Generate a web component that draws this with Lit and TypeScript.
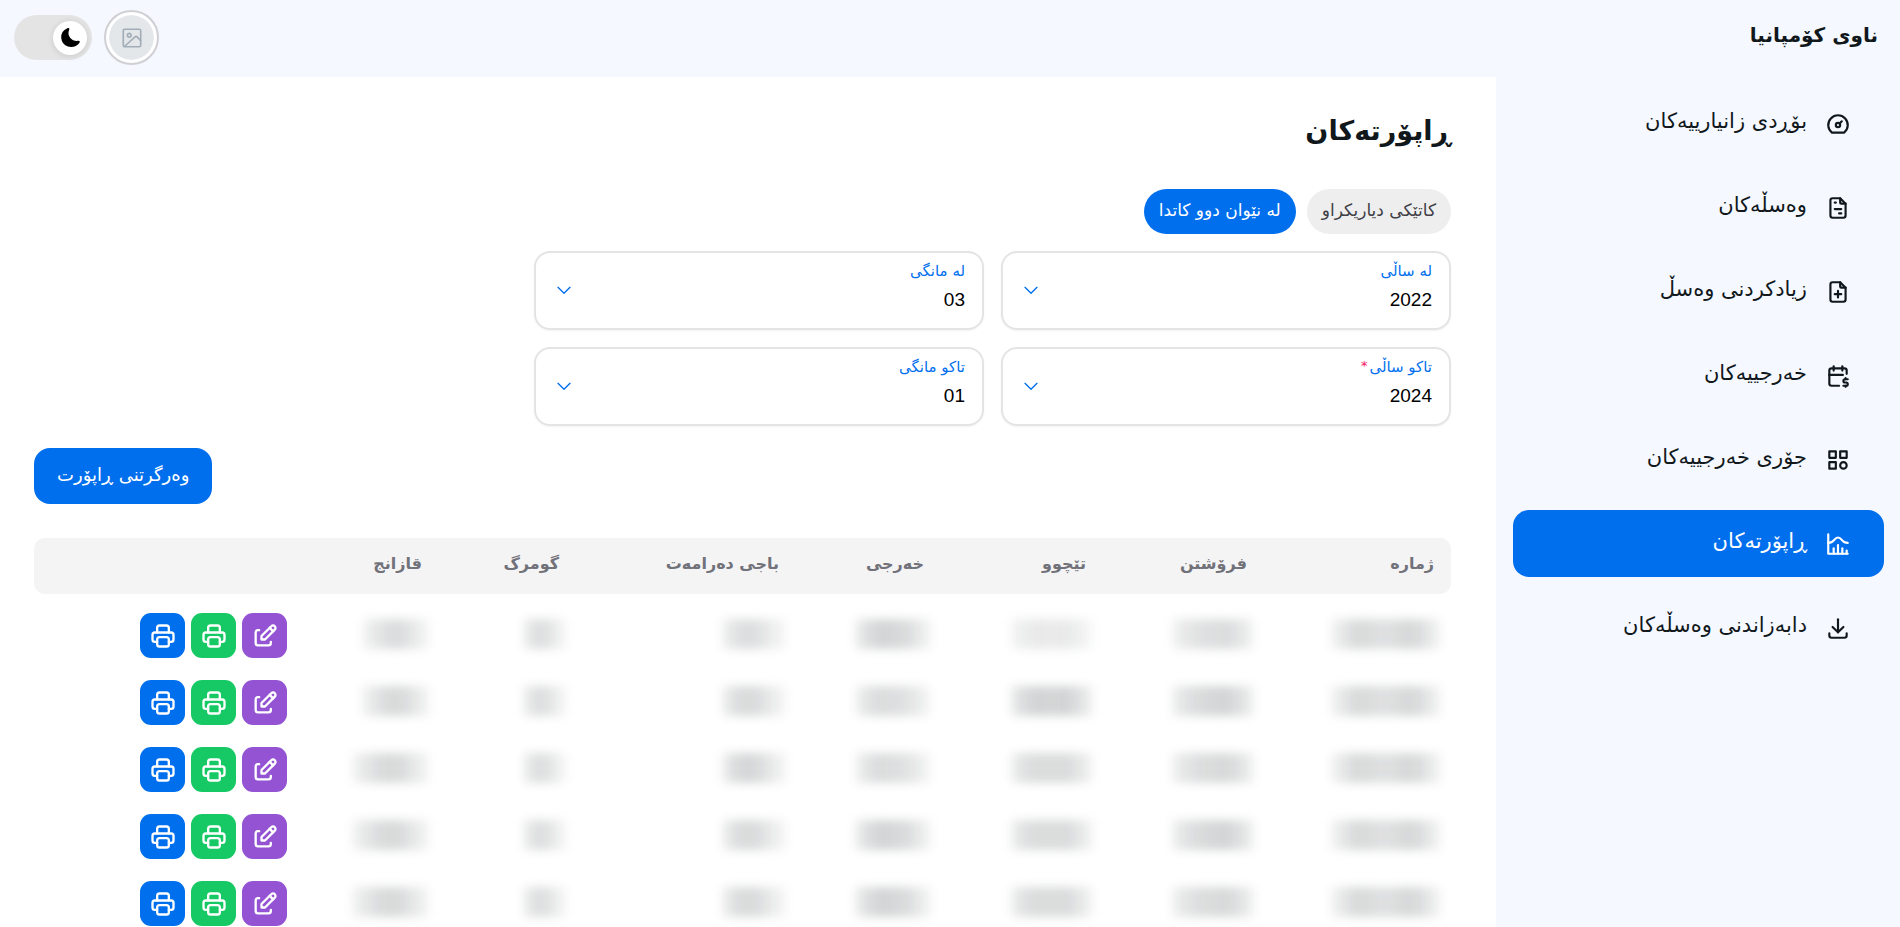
import { LitElement, html, svg, css } from "lit";
import { customElement, property, state } from "lit/decorators.js";
import { classMap } from "lit/directives/class-map.js";

const ICONS: Record<string, string[]> = {
  dashboard: ["M10 13a2 2 0 1 0 4 0a2 2 0 1 0 -4 0", "M13.45 11.55l2.05 -2.05", "M6.4 20a9 9 0 1 1 11.2 0z"],
  invoice: ["M14 3v4a1 1 0 0 0 1 1h4", "M17 21h-10a2 2 0 0 1 -2 -2v-14a2 2 0 0 1 2 -2h7l5 5v11a2 2 0 0 1 -2 2z", "M9 7h1", "M9 13h6", "M13 17h2"],
  filePlus: ["M14 3v4a1 1 0 0 0 1 1h4", "M17 21h-10a2 2 0 0 1 -2 -2v-14a2 2 0 0 1 2 -2h7l5 5v11a2 2 0 0 1 -2 2z", "M12 11v6", "M9 14h6"],
  calendarDollar: ["M13 21h-7a2 2 0 0 1 -2 -2v-12a2 2 0 0 1 2 -2h12a2 2 0 0 1 2 2v3", "M16 3v4", "M8 3v4", "M4 11h12.5", "M21 15h-2.5a1.5 1.5 0 0 0 0 3h1a1.5 1.5 0 0 1 0 3h-2.5", "M19 21v1m0 -8v1"],
  category: ["M4 4h6v6h-6z", "M14 4h6v6h-6z", "M4 14h6v6h-6z", "M14 17a3 3 0 1 0 6 0a3 3 0 1 0 -6 0"],
  histogram: ["M3 3v18h18", "M20 18v3", "M16 16v5", "M12 13v8", "M8 16v5", "M3 11c6 0 5 -5 9 -5s3 5 9 5"],
  download: ["M4 17v2a2 2 0 0 0 2 2h12a2 2 0 0 0 2 -2v-2", "M7 11l5 5l5 -5", "M12 4v12"],
  printer: ["M17 17h2a2 2 0 0 0 2 -2v-4a2 2 0 0 0 -2 -2h-14a2 2 0 0 0 -2 2v4a2 2 0 0 0 2 2h2", "M17 9v-4a2 2 0 0 0 -2 -2h-6a2 2 0 0 0 -2 2v4", "M7 15a2 2 0 0 1 2 -2h6a2 2 0 0 1 2 2v4a2 2 0 0 1 -2 2h-6a2 2 0 0 1 -2 -2z"],
  edit: ["M7 7h-1a2 2 0 0 0 -2 2v9a2 2 0 0 0 2 2h9a2 2 0 0 0 2 -2v-1", "M20.385 6.585a2.1 2.1 0 0 0 -2.97 -2.97l-8.415 8.385v3h3l8.385 -8.415z", "M16 5l3 3"],
  photo: ["M4 2.500h16a1.500 1.500 0 0 1 1.500 1.500v16a1.500 1.500 0 0 1 -1.500 1.500h-16a1.500 1.500 0 0 1 -1.500 -1.500v-16a1.500 1.500 0 0 1 1.500 -1.500z", "M7 9a2 2 0 1 0 4 0a2 2 0 1 0 -4 0", "M4 21l11 -10a2 2 0 0 1 2.800 0l3.700 4"],
  chevron: ["M3 8l9 9l9 -9"],
};

@customElement("ui-icon")
class UiIcon extends LitElement {
  @property() name = "";
  @property({ type: Number }) size = 26;
  @property({ type: Number }) stroke = 2;

  static styles = css`
    :host {
      display: inline-flex;
      flex: none;
    }
    .glyph {
      display: block;
      fill: none;
      stroke: currentColor;
      stroke-linecap: round;
      stroke-linejoin: round;
    }
  `;

  render() {
    return html`<svg class="glyph" viewBox="0 0 24 24" width=${this.size} height=${this.size}
      stroke-width=${this.stroke} aria-hidden="true">
      ${(ICONS[this.name] ?? []).map((d) => svg`<path d=${d}></path>`)}
    </svg>`;
  }
}

@customElement("app-header")
class AppHeader extends LitElement {
  @state() dark = true;

  static styles = css`
    :host {
      display: block;
    }
    .bar {
      display: flex;
      align-items: center;
      justify-content: space-between;
      height: 77px;
      padding: 0 22px 2px 14px;
      box-sizing: border-box;
    }
    .company {
      margin: 0;
      padding-bottom: 6px;
      font-size: 20px;
      line-height: 32px;
      font-weight: 700;
    }
    .tools {
      display: flex;
      align-items: center;
      gap: 12px;
    }
    .avatar {
      display: grid;
      place-items: center;
      width: 55px;
      height: 55px;
      padding: 3px;
      box-sizing: border-box;
      border: 2px solid #d0d0d4;
      border-radius: 50%;
      background: #e4e7ea content-box;
      color: #a3adb8;
      box-shadow: inset 0 0 0 3px #fff;
      cursor: pointer;
    }
    .switch {
      display: grid;
      cursor: pointer;
    }
    .switch > * {
      grid-area: 1 / 1;
    }
    .track {
      appearance: none;
      width: 78px;
      height: 45px;
      margin: 0;
      border-radius: 23px;
      background: #e4e4e5;
      cursor: pointer;
    }
    .thumb {
      place-self: center end;
      display: grid;
      place-items: center;
      width: 34px;
      height: 34px;
      margin: 0 5px;
      border-radius: 50%;
      background: #fff;
      box-shadow: 0 1px 6px rgba(0, 0, 0, 0.12);
      pointer-events: none;
    }
    .track:checked + .thumb {
      justify-self: start;
    }
    .moon {
      width: 23px;
      height: 23px;
      fill: #000;
    }
  `;

  render() {
    return html`
      <header class="bar">
        <h2 class="company">ناوی کۆمپانیا</h2>
        <div class="tools">
          <button class="avatar" aria-label="هەژمار">
            <ui-icon name="photo" size="22" stroke="1.8"></ui-icon>
          </button>
          <label class="switch">
            <input class="track" type="checkbox" role="switch" aria-label="دۆخی تاریک"
              .checked=${this.dark}
              @change=${(e: Event) => (this.dark = (e.target as HTMLInputElement).checked)} />
            <span class="thumb">
              <svg class="moon" viewBox="0 0 24 24" aria-hidden="true">
                <path d="M21.53 15.93c-.16-.27-.61-.69-1.73-.49a8.46 8.46 0 01-1.88.13 8.409 8.409 0 01-5.91-2.82 8.068 8.068 0 01-1.44-8.66c.44-1.01.13-1.54-.09-1.76s-.77-.55-1.83-.11a10.318 10.318 0 00-6.32 10.21 10.475 10.475 0 007.04 8.99 10 10 0 002.89.55c.16.01.32.02.48.02a10.5 10.5 0 008.47-4.27c.67-.93.49-1.519.32-1.79z"></path>
              </svg>
            </span>
          </label>
        </div>
      </header>
    `;
  }
}

const LINKS = [
  { icon: "dashboard", text: "بۆڕدی زانیارییەکان" },
  { icon: "invoice", text: "وەسڵەکان" },
  { icon: "filePlus", text: "زیادکردنی وەسڵ" },
  { icon: "calendarDollar", text: "خەرجییەکان" },
  { icon: "category", text: "جۆری خەرجییەکان" },
  { icon: "histogram", text: "ڕاپۆرتەکان", active: true },
  { icon: "download", text: "دابەزاندنی وەسڵەکان" },
];

@customElement("app-sidebar")
class AppSidebar extends LitElement {
  static styles = css`
    :host {
      display: block;
    }
    .nav {
      display: flex;
      flex-direction: column;
      gap: 17px;
      padding: 13px 16px 13px 17px;
    }
    .item {
      display: flex;
      align-items: center;
      gap: 18px;
      height: 67px;
      padding: 0 33px;
      border-radius: 16px;
      color: #11181c;
      font-size: 21px;
      text-decoration: none;
    }
    .text {
      padding-bottom: 6px;
    }
    .active {
      background: #006fee;
      color: #fff;
    }
  `;

  render() {
    return html`
      <nav class="nav">
        ${LINKS.map(
          (l) => html`<a href="#" class=${classMap({ item: true, active: !!l.active })}>
            <ui-icon name=${l.icon}></ui-icon><span class="text">${l.text}</span>
          </a>`
        )}
      </nav>
    `;
  }
}

const FIELDS = [
  { id: "from-year", label: "لە ساڵی", value: "2022", options: ["2021", "2022", "2023", "2024"] },
  { id: "from-month", label: "لە مانگی", value: "03", options: ["01", "02", "03", "04"] },
  { id: "to-year", label: "تاکو ساڵی", value: "2024", options: ["2021", "2022", "2023", "2024"], required: true },
  { id: "to-month", label: "تاکو مانگی", value: "01", options: ["01", "02", "03", "04"] },
];

@customElement("report-filters")
class ReportFilters extends LitElement {
  static styles = css`
    :host {
      display: block;
    }
    .pills {
      display: flex;
      gap: 11px;
    }
    .pill {
      height: 45px;
      padding: 0 15px 4px;
      border: 0;
      border-radius: 23px;
      background: #eeeeee;
      color: #3f3f46;
      font: inherit;
      font-size: 17px;
      cursor: pointer;
    }
    .chosen {
      background: #006fee;
      color: #fff;
    }
    .fields {
      display: grid;
      grid-template-columns: repeat(2, minmax(0, 450px));
      gap: 17px;
      margin-top: 17px;
    }
    .field {
      display: grid;
      grid-template-columns: 1fr auto;
      border: 2px solid #e4e4e5;
      border-radius: 16px;
      box-shadow: 0 1px 2px rgba(0, 0, 0, 0.05);
      color: #006fee;
    }
    .label {
      grid-area: 1 / 1;
      align-self: start;
      justify-self: start;
      padding: 6px 17px 0;
      font-size: 15px;
      line-height: 24px;
      z-index: 1;
    }
    .star {
      color: #f31260;
      font-size: 13px;
      margin-inline-start: 2px;
      vertical-align: 2px;
      line-height: 1;
    }
    .box {
      grid-area: 1 / 1 / 2 / 3;
      appearance: none;
      width: 100%;
      height: 75px;
      padding: 18px 17px 0;
      border: 0;
      border-radius: 14px;
      background: none;
      color: #000;
      font-family: "Liberation Sans", Arial, sans-serif;
      font-size: 19px;
    }
    .arrow {
      grid-area: 1 / 2;
      align-self: center;
      padding: 0 0 2px 20px;
      pointer-events: none;
    }
    .actions {
      display: flex;
      justify-content: flex-end;
      margin-top: 22px;
    }
    .submit {
      height: 56px;
      padding: 0 23px 4px;
      border: 0;
      border-radius: 16px;
      background: #006fee;
      color: #fff;
      font: inherit;
      font-size: 18px;
      cursor: pointer;
    }
  `;

  render() {
    return html`
      <div class="pills">
        <button class="pill">کاتێکی دیاریکراو</button>
        <button class="pill chosen">لە نێوان دوو کاتدا</button>
      </div>
      <div class="fields">
        ${FIELDS.map(
          (f) => html`<div class="field">
            <label class="label" for=${f.id}>${f.label}${f.required ? html`<span class="star">*</span>` : ""}</label>
            <select class="box" id=${f.id}>
              ${f.options.map((o) => html`<option ?selected=${o === f.value}>${o}</option>`)}
            </select>
            <ui-icon class="arrow" name="chevron" size="16"></ui-icon>
          </div>`
        )}
      </div>
      <div class="actions"><button class="submit">وەرگرتنی ڕاپۆرت</button></div>
    `;
  }
}

const COLUMNS = [
  { title: "ژمارە", share: 187, length: 110, tone: [25, 50, 80, 78, 66, 68, 84, 80, 50, 20] },
  { title: "فرۆشتن", share: 161, length: 82, tone: [28, 55, 72, 78, 84, 60, 25] },
  { title: "تێچوو", share: 162, length: 82, tone: [35, 65, 78, 74, 78, 55, 20] },
  { title: "خەرجی", share: 145, length: 76, tone: [30, 65, 84, 78, 72, 45, 20] },
  { title: "باجی دەرامەت", share: 220, length: 64, tone: [30, 68, 82, 68, 40, 20] },
  { title: "گومرگ", share: 137, length: 43, tone: [30, 72, 78, 45, 20] },
  { title: "قازانج", share: 135, length: 67, tone: [25, 55, 80, 80, 50, 22] },
  { title: "", share: 270, length: 0, tone: [] },
];
const TOTAL = COLUMNS.reduce((sum, c) => sum + c.share, 0);

/* Strength of each concealed amount relative to its column, one row per report. */
const ROWS = [
  [10, 9, 6, 11, 9, 9, 9],
  [10, 11, 12, 9, 10, 9, 10],
  [10, 10, 10, 9, 11, 9, 10],
  [10, 11, 10, 11, 10, 9, 10],
  [10, 10, 10, 11, 10, 9, 10],
];

@customElement("report-table")
class ReportTable extends LitElement {
  static styles = css`
    :host {
      display: block;
    }
    .table {
      width: 100%;
      table-layout: fixed;
      border-collapse: separate;
      border-spacing: 0;
    }
    .head {
      height: 56px;
      padding: 0 17px 6px;
      box-sizing: border-box;
      background: #f4f4f5;
      color: #71717a;
      font-size: 16px;
      font-weight: 700;
      text-align: start;
      white-space: nowrap;
    }
    .head:first-child {
      border-radius: 0 11px 11px 0;
    }
    .head:last-child {
      border-radius: 11px 0 0 11px;
    }
    .gap {
      height: 8px;
      padding: 0;
    }
    .cell {
      height: 67px;
      padding: 0 10px;
      box-sizing: border-box;
      vertical-align: middle;
    }
    .amount {
      display: block;
      height: 30px;
      margin-bottom: 4px;
      filter: blur(5px);
    }
    .buttons {
      display: flex;
      gap: 6px;
      padding-inline-start: 7px;
    }
    .action {
      display: grid;
      place-items: center;
      width: 45px;
      height: 45px;
      padding: 0;
      border: 0;
      border-radius: 11px;
      color: #fff;
      cursor: pointer;
    }
    .purple {
      background: #9353d3;
    }
    .green {
      background: #17c964;
    }
    .blue {
      background: #006fee;
    }
  `;

  private veil(row: number, col: number) {
    const c = COLUMNS[col];
    const width = col === 6 && row > 1 ? c.length + 10 : c.length;
    const stops = c.tone.map((t) => `rgba(17, 24, 28, ${((t * ROWS[row][col]) / 5000).toFixed(3)})`);
    return `width:${width}px;background:linear-gradient(to right, ${stops.join(", ")})`;
  }

  render() {
    return html`
      <table class="table">
        <colgroup>
          ${COLUMNS.map((c) => html`<col style="width:${((c.share / TOTAL) * 100).toFixed(2)}%" />`)}
        </colgroup>
        <thead>
          <tr>${COLUMNS.map((c) => html`<th class="head" scope="col">${c.title}</th>`)}</tr>
        </thead>
        <tbody>
          <tr><td class="gap" colspan="8"></td></tr>
          ${ROWS.map(
            (r, i) => html`<tr>
              ${r.map((_, j) => html`<td class="cell"><span class="amount" style=${this.veil(i, j)}></span></td>`)}
              <td class="cell">
                <div class="buttons">
                  <button class="action purple" aria-label="دەستکاری"><ui-icon name="edit" size="28"></ui-icon></button>
                  <button class="action green" aria-label="چاپکردن"><ui-icon name="printer" size="28"></ui-icon></button>
                  <button class="action blue" aria-label="چاپکردنی ڕاپۆرت"><ui-icon name="printer" size="28"></ui-icon></button>
                </div>
              </td>
            </tr>`
          )}
        </tbody>
      </table>
    `;
  }
}

@customElement("app-root")
class AppRoot extends LitElement {
  static styles = css`
    :host {
      display: flex;
      flex-direction: column;
      height: 100vh;
      overflow: hidden;
      direction: rtl;
      background: #f5f8ff;
      color: #11181c;
      font-family: "DejaVu Sans", sans-serif;
    }
    .body {
      display: flex;
      flex: 1;
      min-height: 0;
    }
    .side {
      flex: 0 0 404px;
    }
    .main {
      flex: 1;
      min-width: 0;
      overflow: hidden;
      padding: 28px 45px 0 34px;
      background: #fff;
    }
    .title {
      margin: 0 0 32px;
      font-size: 27px;
      line-height: 52px;
      font-weight: 700;
    }
    .list {
      margin-top: 34px;
    }
  `;

  render() {
    return html`
      <app-header></app-header>
      <div class="body">
        <app-sidebar class="side"></app-sidebar>
        <main class="main">
          <h1 class="title">ڕاپۆرتەکان</h1>
          <report-filters></report-filters>
          <report-table class="list"></report-table>
        </main>
      </div>
    `;
  }
}
